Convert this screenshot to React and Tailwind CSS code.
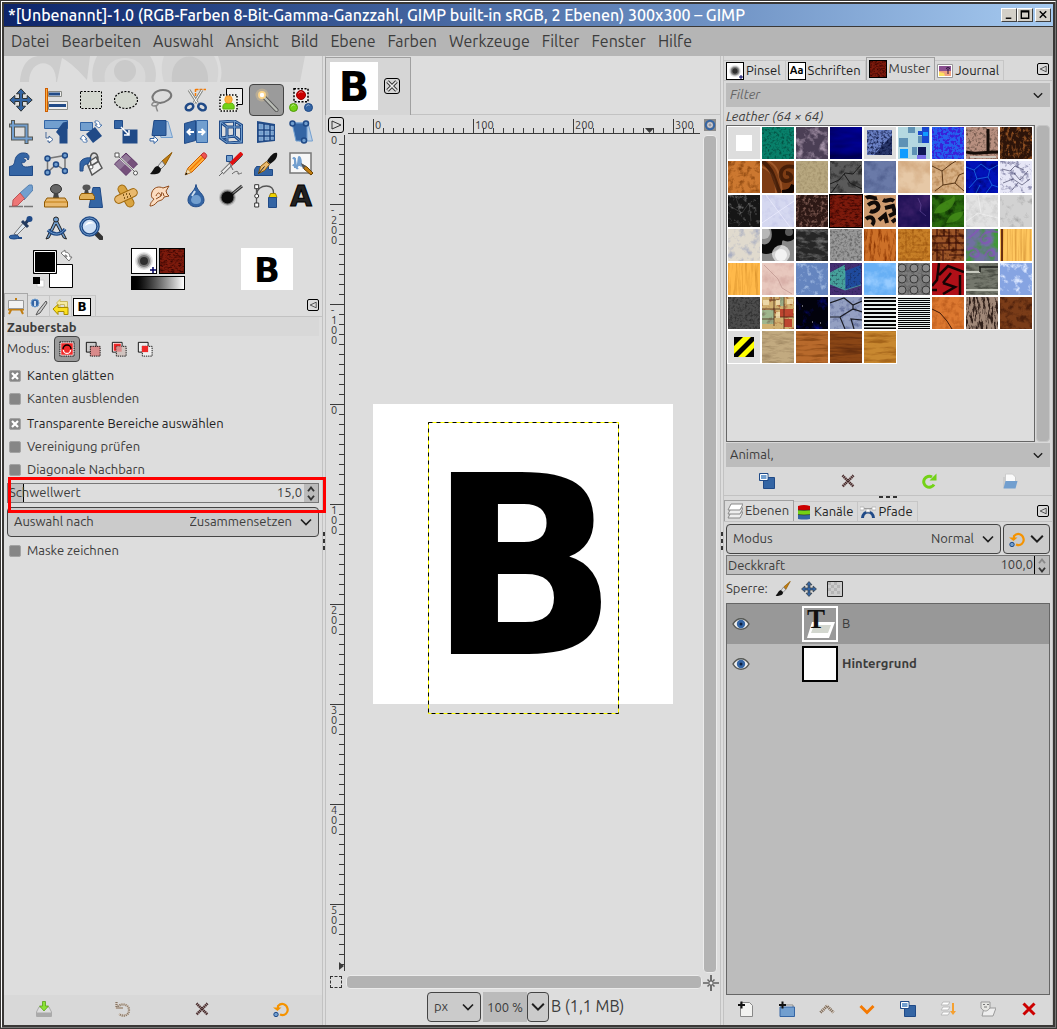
import { useEffect, useId, useRef, useState } from 'react'
import { clsx } from 'clsx'

const B = '#3465a4'
const D = '#204a87'
const L = '#729fcf'

const toolIcons = {
  Verschieben: (
    <path d="M12 .8l4.500 5h-3v4.700h4.700v-3l5 4.500-5 4.500v-3h-4.700v4.700h3l-4.500 5-4.500-5h3v-4.700H5.800v3l-5-4.500 5-4.500v3h4.700V5.800h-3z" fill={B} stroke="#2e3436" />
  ),
  Ausrichten: (
    <>
      <path d="M2.500 0v24" stroke="#ce5c00" strokeWidth="3" />
      <path d="M2.500 1v22" stroke="#fcaf3e" />
      <path d="M4.500 3.500h13v5h-13zM4.500 13.500h19v8h-19z" fill="#eee" stroke="#888a85" />
      <path d="M5 6h11M5 17.500h17" stroke={D} strokeWidth="3" />
    </>
  ),
  'Rechteckige Auswahl': (
    <rect x="1.500" y="3.500" width="21" height="17" fill="#d3d7cf" stroke="#000" strokeDasharray="2 1.500" />
  ),
  'Elliptische Auswahl': (
    <ellipse cx="12" cy="12" rx="11.500" ry="8.500" fill="#d3d7cf" stroke="#000" strokeWidth="1.200" strokeDasharray="2 1.500" />
  ),
  'Freie Auswahl': (
    <>
      <path d="M6 14C0 9 6 2 14 2s11 6 5 10-9 3-13 2" fill="none" stroke="#777" strokeWidth="2" />
      <path d="M6 14c-4 1-4 4-1 4s5-2 4-3-3-2-3-1M7.500 18c-1 3 1 3 1 5.500" fill="none" stroke="#8a8a8a" strokeWidth="1.500" />
    </>
  ),
  'Magnetische Schere': (
    <>
      <path d="M11.500 1v8M11.500 1.500H22" stroke="#f57900" strokeWidth="1.500" strokeDasharray="3 1" />
      <path d="M5 2l8.500 13M18 2L10 15" stroke="#888a85" strokeWidth="3" />
      <path d="M5 2l8.500 13M18 2L10 15" stroke="#fff" />
      <ellipse cx="5.500" cy="19" rx="4" ry="3" fill="none" stroke={D} strokeWidth="2.500" transform="rotate(-30 5.500 19)" />
      <ellipse cx="18" cy="19" rx="4" ry="3" fill="none" stroke={D} strokeWidth="2.500" transform="rotate(30 18 19)" />
    </>
  ),
  Vordergrundauswahl: (
    <>
      <path d="M7.500 .5h16v16h-16z" fill="#eee" stroke="#000" />
      <path d="M1 7h17v16H1z" fill="#f2f2e8" stroke="#000" strokeWidth="1.500" strokeDasharray="1.500 1.500" />
      <path d="M4 21c-1-6 3-6 6-6s6 0 5 6z" fill="#73d216" stroke="#5aae10" />
      <circle cx="9.500" cy="11.500" r="3.800" fill="#fcaf3e" stroke="#f57900" strokeWidth=".5" />
    </>
  ),
  Zauberstab: (
    <>
      <circle cx="7" cy="7" r="6.500" fill="#fcd58a" opacity=".3" />
      <path d="M9 9l12.500 13" stroke="#555" strokeWidth="4" strokeLinecap="round" />
      <path d="M9 9l12.500 13" stroke="#babdb6" strokeWidth="2.500" strokeLinecap="round" />
      <circle cx="7" cy="7" r="4" fill="#fcd58a" />
      <circle cx="7" cy="7" r="2.200" fill="#fff" />
    </>
  ),
  'Nach Farbe auswählen': (
    <>
      <path d="M5 .8h14v13H5z" fill="#eee" stroke="#000" strokeWidth="1.500" strokeDasharray="2 1.500" />
      <circle cx="12" cy="7" r="4.500" fill="#c00" stroke="#900" />
      <circle cx="4.500" cy="19.500" r="4" fill="#73d216" stroke="#4e9a06" />
      <circle cx="19.500" cy="19.500" r="4" fill={B} stroke={D} />
      <path d="M9.500 5.500c1-2 3-2 4-1M2.500 18.500c1-2 2-2 3-1M17.500 18.500c1-2 2-2 3-1" stroke="#fff" opacity=".5" />
    </>
  ),
  Zuschneiden: (
    <>
      <path d="M4 0v18.500h20M0 5.500h17.500V24" fill="none" stroke="#555753" strokeWidth="4" />
      <path d="M4 1v17.500h19M1 5.500h16.500V23" fill="none" stroke={L} strokeWidth="2" />
    </>
  ),
  'Vereinheitlichtes Transformieren': (
    <>
      <path d="M.5 .5h23v8H.5z" fill={L} stroke={B} />
      <path d="M19 2.500l4.500-1v22h-8V16L12 12z" fill={D} />
      <path d="M2 12v6h3v-2l4 3.500-4 3.500v-2H3" fill="#fff" stroke={D} strokeWidth=".8" />
    </>
  ),
  Drehen: (
    <>
      <path d="M1.500 2.500h12v8h-12z" fill={L} stroke={B} />
      <path d="M7 14l9-7 7 9-9 7z" fill={D} />
      <path d="M16 1c4-1 5 2 5 4h2l-3 3-4-3h2c0-2-1-2-2-2zM8 22c-4 1-5-1-5-3H1l3-4 4 4H6c0 1 1 1 2 1z" fill="#fff" stroke={B} strokeWidth=".8" />
    </>
  ),
  Skalieren: (
    <>
      <path d="M8.500 9.500h15v14h-15z" fill={D} />
      <path d="M.5 .5h8v8h-8z" fill={B} stroke={D} />
      <path d="M7 7l8 8m-5 0h5v-5" stroke="#fff" strokeWidth="1.500" fill="none" />
    </>
  ),
  Scheren: (
    <>
      <path d="M8 1.500h11l4.500 16H12z" fill="#b8cde4" stroke={L} />
      <path d="M5 .5h12v15H3z" fill={B} stroke={D} />
      <path d="M1 18.500h4v-2.500l4 4-4 3.500V21H1z" fill="#fff" stroke={B} />
    </>
  ),
  Spiegeln: (
    <>
      <path d="M.5 3.500l11-3v20l-11 3z" fill={B} stroke={D} />
      <path d="M12.500 .5h11v22h-11z" fill={L} stroke={B} />
      <path d="M10 12H4m2.500-3L3.500 12l3 3M14 12h6m-2.500-3l3 3-3 3" fill="none" stroke="#fff" strokeWidth="2" />
    </>
  ),
  Perspektive: (
    <>
      <path d="M1.500 2l14-1 7 4v17l-14 1-7-5zM8 7h14M8 7v15M1.500 2L8 7M15.500 1v15L2 18m13.500-2l7 6" fill="none" stroke={D} strokeWidth="3" />
      <path d="M1.500 2l14-1 7 4v17l-14 1-7-5zM8 7h14M8 7v15M1.500 2L8 7M15.500 1v15L2 18m13.500-2l7 6" fill="none" stroke={L} />
    </>
  ),
  '3D-Transformation': (
    <>
      <path d="M3 1l18 3v17L3 23z" fill={D} />
      <path d="M5 4l4 .6v4.400H5zm6 1l4 .5v3.500h-4zm6 1l2.500.3V9.500H17zM5 11h4v4H5zm6 0h4v4h-4zm6 0h2.500v4H17zM5 17h4v3.500H5zm6 0h4v3h-4zm6 0h2.500v2.500H17z" fill={L} stroke="#b8cde4" strokeWidth=".4" />
    </>
  ),
  'Griff-Transformation': (
    <>
      <path d="M5 3h14l4.500 18H10z" fill="#b8cde4" stroke={L} />
      <path d="M3 3h15v18H7z" fill={B} stroke={L} />
      <g fill={L} stroke={D} strokeWidth="1.500">
        <circle cx="3.500" cy="3.500" r="2.500" />
        <circle cx="17" cy="3.500" r="2.500" />
        <circle cx="15" cy="20.500" r="2.500" />
      </g>
    </>
  ),
  'Warp-Transformation': (
    <path d="M.5 23.500v-9C5 14 5.500 11 6 8 7 3 11 .5 15 1c5 0 6 4 4 7-1-3-3-3-4-2s1 2 2 2c-1 3-3 3-4 2-1 5 3 6 10.500 4v9.500z" fill={B} stroke={D} />
  ),
  'Käfig-Transformation': (
    <>
      <path d="M3.500 6.500L21 3.500v15l-9-6-8.500 8z" fill="none" stroke="#777" strokeWidth="1.500" />
      <g fill={L} stroke={D} strokeWidth="1.500">
        <circle cx="3.500" cy="6.500" r="2.500" />
        <circle cx="21" cy="3.500" r="2.500" />
        <circle cx="21" cy="19" r="2.500" />
        <circle cx="12" cy="12.500" r="2.500" />
        <circle cx="3.500" cy="20.500" r="2.500" />
      </g>
    </>
  ),
  Füllen: (
    <>
      <path d="M8 11l9-6 6 11-10 7z" fill="#eee" stroke="#555" strokeWidth="1.500" />
      <path d="M12 13C10 6 12 1 15 1s4 4 4 7M12 14l8-5" fill="none" stroke="#555" strokeWidth="1.500" />
      <circle cx="12" cy="15" r="2" fill="#fff" stroke="#555" />
      <path d="M12 6C6 5 1 8 1 12v7h3c0-5 1-7 5-7z" fill={B} stroke={D} />
    </>
  ),
  Farbverlauf: (
    <>
      <path d="M12 1l11.500 11L12 23.500.5 12z" fill="#75507b" stroke="#5c3566" />
      <path d="M12 2l5 4.500L6 17.500 1 12z" fill="#ad9fb5" opacity=".5" />
      <path d="M3 3l19 18" stroke="#fff" strokeWidth="2" />
      <path d="M3 3l19 18" stroke="#555" />
      <path d="M1 1h4v4H1z" fill="#fff" stroke="#555" />
      <circle cx="21.500" cy="21" r="2" fill="#fff" stroke="#555" />
    </>
  ),
  Pinsel: (
    <>
      <path d="M23 .5L13 9l3 4z" fill="#c17d11" stroke="#8f5902" />
      <path d="M13 9l-4 5 3 3 4-4z" fill="#ddd" stroke="#777" />
      <path d="M9 14c-4 0-4 4-8 8 5 1 11 0 11-5z" fill="#111" />
    </>
  ),
  Stift: (
    <>
      <path d="M1.500 22.500L4 16 18 2l4 4L8 20z" fill="#fcaf3e" stroke="#ce5c00" />
      <path d="M6 18L20 4" stroke="#f57900" strokeWidth="1.500" />
      <path d="M17 3l2-2c2-1 4.500 2 3.500 4l-2 2z" fill="#ef5350" stroke="#b33" />
      <path d="M1 23l2.500-6 3.500 3.500z" fill="#f2deb5" stroke="#8f5902" strokeWidth=".5" />
      <path d="M1 23l1.200-2.500 1.500 1.500z" fill="#000" />
    </>
  ),
  Sprühpistole: (
    <>
      <path d="M7.500 3.500h6v6h-6z" fill={L} stroke={D} />
      <path d="M3 21L14 10" stroke="#777" strokeWidth="4" />
      <path d="M3 21L14 10" stroke="#eee" strokeWidth="2" />
      <path d="M12 12L23 1" stroke="#e01010" strokeWidth="4" />
      <path d="M15 12L23.500 3.500" stroke="#555" />
      <path d="M10 10l4 8M0 24l4-4M13 22c4-4 7-3 6 0M19 22c2 0 3-1 4-1" fill="none" stroke="#666" />
    </>
  ),
  Tinte: (
    <>
      <path d="M2.500 14.500h12v3h4v6H.5v-6z" fill={B} stroke={D} />
      <path d="M23 1c-3-1-6 2-10 8l3 3c5-3 8-7 7-11z" fill="#111" />
      <path d="M12.500 9.500l3 3-5 6-6 3 2-7z" fill="#e9b96e" stroke="#8f5902" />
      <path d="M4.500 21.500l6-7" stroke="#222" />
    </>
  ),
  'MyPaint-Pinsel': (
    <>
      <path d="M1 1h21v20H1z" fill="#f7f7f7" stroke="#777" strokeWidth="1.500" />
      <path d="M4 7c3-5 2 11 4 8s1-13 3-9 0 10 2 7M4 14c2-4 3 4 5 2M6 6v10M10 5v9" fill="none" stroke={L} strokeWidth="2" />
      <path d="M14 13l4 2 6 6-2 2-7-6z" fill="#c17d11" stroke="#6b4302" />
      <path d="M12 11l5 3-3 3z" fill="#555" />
    </>
  ),
  Radierer: (
    <>
      <path d="M0 22.500h14M15 22.500h9" stroke="#777" strokeWidth="1.500" />
      <path d="M11 9L20 1l3 0 1 5L15 16z" fill={L} stroke="#5580b0" />
      <path d="M4 16l7-7 4.500 5.500-7 7-5 .5z" fill="#e77" stroke="#b55" />
    </>
  ),
  Klonen: (
    <>
      <ellipse cx="12" cy="5" rx="5.500" ry="4.500" fill="#666" stroke="#333" />
      <path d="M10 9h4l1 5H9z" fill="#444" />
      <path d="M3 14h18l2.500 4v5H.5v-5z" fill="#e9b96e" stroke="#8f5902" />
      <path d="M1 18h22" stroke="#c17d11" />
    </>
  ),
  'Perspektivisches Klonen': (
    <>
      <path d="M14 3.500h7l2.500 20H10z" fill={B} stroke={D} />
      <ellipse cx="7.500" cy="3.500" rx="4" ry="3" fill="#555" />
      <path d="M6 6h3l1 4H5z" fill="#444" />
      <path d="M2.500 9.500h11l2 3v3H.5v-3z" fill="#e0b058" stroke="#8f5902" />
    </>
  ),
  Heilen: (
    <>
      <rect x="0" y="8" width="24" height="8" rx="4" fill="#d9a441" stroke="#a06a10" transform="rotate(60 12 12)" />
      <rect x="0" y="8" width="24" height="8" rx="4" fill="#e9b96e" stroke="#a06a10" transform="rotate(-25 12 12)" />
      <path d="M9 11h1m2-1h1m2 0h1m-6 4h1m2-1h1m2-1h1" stroke="#5c3a00" strokeWidth="1.500" />
    </>
  ),
  Verschmieren: (
    <path d="M1 22c1-5 2-4 4-7-3-1-3-4-2-7 2-5 7-6 11-4l6-2-3 5 1 3 2 2-5 1c-1 4-5 3-7 5-2 3-5 4-7 4zM7 12c2-5 4-3 5 0m-5 3l5-3 1-4m2 4l-1-3" fill="#fbdcc0" stroke="#8f4a1a" />
  ),
  Weichzeichnen: (
    <>
      <path d="M12 .5c1 7 8 9 8 15.500 0 9-16 9-16 0C4 9.500 11 8 12 .5z" fill={B} stroke={D} />
      <path d="M12 11c3 0 5 2 5 5s-2 4-5 4-5-2-5-4 2-5 5-5z" fill={L} />
      <path d="M8 12c1-2 2-3 3-5" stroke="#cde" strokeWidth="2" />
    </>
  ),
  Abwedeln: (
    <>
      <path d="M12 11L23 2" stroke="#333" strokeWidth="3" />
      <path d="M13 10L23 2" stroke="#aaa" />
      <circle cx="8.500" cy="13.500" r="8.500" fill="#000" opacity=".15" />
      <circle cx="8.500" cy="13.500" r="7.200" fill="#000" opacity=".4" />
      <circle cx="8.500" cy="13.500" r="6" fill="#0a0a0a" />
    </>
  ),
  Pfade: (
    <>
      <path d="M2.500 21V11c0-6 5-9 10-9s7 3 7 7M2.500 3v18" fill="none" stroke="#555" strokeWidth="1.300" />
      <path d="M.7.700h4v4h-4zM.7 19h4v4h-4z" fill="#fff" stroke="#333" />
      <circle cx="2.700" cy="12" r="2" fill="#fff" stroke="#333" />
      <path d="M16.500 9.500h5l1.500 4h-8z" fill="#edd400" stroke="#a08000" />
      <path d="M14.500 13.500h8v10h-8z" fill={B} stroke={D} />
    </>
  ),
  Text: (
    <text x="12" y="22" textAnchor="middle" fontFamily="DejaVu Sans" fontWeight="bold" fontSize="28" fill="#222" stroke="#000">A</text>
  ),
  Farbpipette: (
    <>
      <path d="M5 18L15 6l3 3L8 19z" fill="#dfe8f0" stroke="#777" />
      <path d="M13 5l6 6M16 8l4-5" stroke="#223a5e" strokeWidth="3" />
      <circle cx="20.500" cy="3" r="3" fill={D} />
      <ellipse cx="5" cy="21" rx="5" ry="2" fill={B} stroke={D} />
      <path d="M9 22h4" stroke={D} strokeWidth="2" />
    </>
  ),
  Maßband: (
    <>
      <path d="M10.500 5h3l9 18-3-1-7.500-14L5 22l-3 1z" fill={L} stroke="#222" />
      <path d="M4 14c6 6 13 5 17-1" fill="none" stroke={D} strokeWidth="3.500" />
      <path d="M4 14c6 6 13 5 17-1" fill="none" stroke={L} />
      <circle cx="12" cy="3.500" r="2.500" fill={L} stroke="#222" />
    </>
  ),
  Vergrößerung: (
    <>
      <path d="M17 17l5 5" stroke="#333" strokeWidth="5" strokeLinecap="round" />
      <circle cx="10.500" cy="10.500" r="8.500" fill="#cfe0f5" stroke={D} strokeWidth="3.500" />
      <circle cx="10.500" cy="10.500" r="8.500" fill="none" stroke={L} />
      <path d="M6 10c1-4 6-6 9-2-3-1-6 0-9 2z" fill="#fff" />
    </>
  ),
}

// base and vein colours, noise frequency, gain and offset; art and over are drawn below and above the noise
const patterns = [
  { name: 'Clipboard', base: '#dddddd', art: <path d="M8 8h16v16H8z" fill="#fff" /> },
  { name: 'Green', base: '#08806a', vein: '#033f35', freq: '.4', gain: 2, off: 1 },
  { name: 'Purple Marble', base: '#4b3f55', vein: '#a593a8', freq: '.12', gain: 3, off: 1.500 },
  { name: 'Blue Grid', base: '#00009a', vein: '#000030', freq: '.01 .04', gain: 3, off: 1.2 },
  {
    name: 'Big Blue', base: '#dddddd', vein: '#000830', freq: '.4', gain: 2, off: .9,
    art: <><path d="M3 3h25v25H3z" fill="#6a80c4" /><path d="M28 8v20H10z" fill="#000830" opacity=".6" /></>,
    over: <path d="M0 0h32v32H0zM3 3v25h25V3z" fill="#dddddd" fillRule="evenodd" />,
  },
  {
    name: 'Blue Squares', base: '#b4d8e0',
    art: (
      <>
        <path d="M10 0h7v6h-7zM1 11h9v9H1zM20 9h6v7h-6zM14 20h5v8h-5z" fill="#5f92b5" />
        <path d="M24 0h7v16h-7zM20 4h4v4h-4z" fill="#1a48d0" />
        <path d="M2 22h8v9H2zM25 5h5v4h-5z" fill="#109cff" />
        <path d="M20 20h8v8h-8z" fill="#101858" />
        <path d="M19 28h9v4h-9z" fill="#7a70e8" />
      </>
    ),
  },
  { name: 'Blue Web', base: '#2460ee', vein: '#3a20d8', freq: '.35', gain: 8, off: 3.8 },
  {
    name: 'Bricks', base: '#b89080', vein: '#6d5448', freq: '.35', gain: 3, off: 1.500,
    over: <><path d="M0 25c8 3 16 0 32 0M22 2v22" fill="none" stroke="#140c08" strokeWidth="3" /><path d="M4 30h26" stroke="#ccc5bc" strokeWidth="2" /></>,
  },
  { name: 'Burlwood', base: '#2c140a', vein: '#8a4c20', freq: '.3 .2', gain: 4, off: 2 },
  { name: 'Burlwood 2', base: '#cc7830', vein: '#8d4810', freq: '.18', gain: 3, off: 1.500 },
  {
    name: 'Chocolate', base: '#7d3c14',
    over: (
      <g fill="none">
        <path d="M0 6c10 4 14 12 14 26M6 0c8 4 12 10 14 32" stroke="#b56a38" strokeWidth="2" opacity=".6" />
        <path d="M0 0c12 8 12 20 18 32M32 6C16 2 16 20 24 20s6-8 0-8" stroke="#230a00" strokeWidth="4" opacity=".6" />
        <path d="M20 32c8 0 10-3 12-8" stroke="#100400" strokeWidth="6" />
      </g>
    ),
  },
  { name: 'Sand', base: '#b8a880', vein: '#9f8e68', freq: '.35', gain: 2, off: .9 },
  { name: 'Rock', base: '#5a5a5a', vein: '#2c2c2c', freq: '.15', gain: 3, off: 1.500, over: <path d="M0 23l9-4 6-7 8 1 8-9M14 13l6 9 12 6M1 32l7-9" fill="none" stroke="#1c1c1c" /> },
  { name: 'Slate', base: '#6a7aa8', vein: '#4c5b8a', freq: '.1', gain: 2, off: .9 },
  { name: 'Crepe', base: '#e6c8a6', vein: '#d0a67c', freq: '.06', gain: 2, off: .9 },
  { name: 'Cracked', base: '#d8b084', vein: '#b0804e', freq: '.25', gain: 2, off: .9, over: <path d="M0 5l10 5 9-7 5-3M10 10l1 14-8 6M11 24l12-2 4-8 5-2M23 22l9 8" fill="none" stroke="#5a3818" /> },
  { name: 'Electric', base: '#0212b8', vein: '#000680', freq: '.12', gain: 3, off: 1.400, over: <path d="M0 6l8 3 7-6 8 6 9-5M8 9l3 9-8 9M11 18l11-2 2-8M22 16l4 8 6 2M26 24l-6 8M10 32l4-8" fill="none" stroke="#269cff" strokeWidth=".8" opacity=".7" /> },
  { name: 'Crackle', base: '#e6e6f6', vein: '#8585a8', freq: '.2', gain: 4, off: 2.2, over: <path d="M2 8l8 2 5-5 9 4M3 22l10-4 9 6 8-6M14 12l6 7 8-9M12 29l6-7" fill="none" stroke="#4c4c6c" strokeWidth=".7" /> },
  { name: 'Black Marble', base: '#161616', vein: '#777777', freq: '.2', gain: 3, off: 1.800, over: <path d="M0 10l14 8 7-10 2 18M7 0l5 14" stroke="#888" fill="none" strokeWidth=".5" opacity=".6" /> },
  { name: 'Lavender', base: '#d5d8f0', vein: '#c8cbea', freq: '.15', gain: 3, off: 1.500, over: <path d="M0 28L32 6M4 0l24 32" stroke="#eeeeff" strokeWidth=".7" /> },
  { name: 'Coffee Beans', base: '#2c1815', vein: '#74524a', freq: '.28', gain: 4, off: 2 },
  { name: 'Leather', base: '#7c1a0c', vein: '#3c0602', freq: '.2 .5', gain: 3, off: 1.400 },
  {
    name: 'Leopard', base: '#cf9c70',
    over: <path d="M2 3c4-3 8 1 11 0M4 10c4-3 8-4 10 0s-4 8-8 6M19 5c5 3 6-3 11 1M21 13l8-2 2 7-6 3M2 24c6-5 10 2 6 6M15 25l6-5 2 8M28 27l4-3" fill="none" stroke="#110b08" strokeWidth="4" />,
  },
  { name: 'Night', base: '#1d1054', vein: '#3b2068', freq: '.05', gain: 3, off: 1.400, over: <path d="M20 3l3 7-1 6 6 5" stroke="#9a7cd0" fill="none" strokeWidth=".5" opacity=".7" /> },
  { name: 'Leaves', base: '#2a6a0e', vein: '#0e3004', freq: '.1', gain: 3, off: 1.400, over: <path d="M2 18C8 4 18 8 22 0c4 8-6 20-20 18zM14 28c4-10 10-10 18-12-2 8-8 12-18 12z" fill="#4f9a1c" opacity=".6" /> },
  { name: 'White Marble', base: '#e2e2e2', vein: '#cecece', freq: '.15', gain: 3, off: 1.400, over: <path d="M0 27l12-9 20 5M12 0l3 18" stroke="#f5f5f5" strokeWidth=".6" fill="none" /> },
  { name: 'Marble', base: '#d2d2d2', vein: '#9c9c9c', freq: '.1', gain: 3, off: 1.700 },
  { name: 'Marble 2', base: '#e0dace', vein: '#a8adc0', freq: '.12', gain: 3, off: 1.600 },
  {
    name: 'Blobs', base: '#888888',
    over: (
      <>
        <path d="M9 0h23v10c-8 6-12-2-12 4S6 28 0 24v-9c6 2 12-4 9-15z" fill="#0a0a0a" />
        <circle cx="19" cy="25" r="9" fill="#f2f2f2" opacity=".7" />
        <circle cx="19" cy="26" r="6" fill="#fff" opacity=".7" />
        <circle cx="2" cy="4" r="6" fill="#ccc" opacity=".7" />
        <circle cx="27" cy="3" r="4" fill="#aaa" opacity=".5" />
      </>
    ),
  },
  { name: 'Moonfoot', base: '#262626', vein: '#6a6a6a', freq: '.1 .2', gain: 3, off: 1.500 },
  { name: 'Paper', base: '#989898', vein: '#6a6a6a', freq: '.4', gain: 3, off: 1.400 },
  { name: 'Bark', base: '#cc7028', vein: '#8d3804', freq: '.35 .08', gain: 3, off: 1.500 },
  { name: 'Parquet', base: '#c88028', vein: '#a05810', freq: '.3', gain: 2, off: .9, over: <path d="M8 1v22H30M15 0v16h17M0 30h25V22" fill="none" stroke="#8f4c0c" strokeWidth=".8" opacity=".7" /> },
  { name: 'Parquet 2', base: '#9b5528', vein: '#502008', freq: '.2', gain: 3, off: 1.400, over: <path d="M0 7h17M5 0v7M12 0v7M17 0v21M24 0v21M17 7h15M17 14h15M0 14h17M0 21h32M5 14v18M11 21v11M17 26h15" fill="none" stroke="#350b04" /> },
  {
    name: 'Swirls', base: '#7070a0', vein: '#409838', freq: '.05', gain: 5, off: 2.3,
    over: <path d="M32 3C12 0 12 16 20 14s2-7-1-4M1 21c10-7 16 7 8 7s-4-6-1-5M19 27c3-9 10-6 9-2s-6 1-4-1M3 9c5-4 8-7 10-9" fill="none" stroke="#8a4cc0" strokeWidth="2" opacity=".6" />,
  },
  { name: 'Pine', base: '#ffc860', vein: '#e0a040', freq: '.4 .01', gain: 3, off: 1.400, over: <path d="M2 0v32" stroke="#6b2f10" strokeWidth="2" /> },
  { name: 'Pine 2', base: '#ffb94a', vein: '#e09830', freq: '.35 .03', gain: 3, off: 1.500 },
  { name: 'Pink Marble', base: '#e8c8be', vein: '#d8b0a8', freq: '.08', gain: 3, off: 1.500, over: <path d="M2 2l14 14 4 9 10 6" stroke="#a87c78" fill="none" strokeWidth=".8" opacity=".6" /> },
  { name: 'Pool', base: '#6585bf', vein: '#98b2dc', freq: '.18', gain: 4, off: 2.2 },
  {
    name: 'Cubes', base: '#452f72', art: <><path d="M0 10l15-8v25L0 21z" fill="#46a09a" /><path d="M15 8l16-6v20l-16 5z" fill="#1f4a9c" /></>,
    vein: '#152040', freq: '.5', gain: 2, off: 1.1,
    over: <path d="M0 21l15 6 16-5M15 8v19M0 10l15-8" stroke="#4fb0a8" strokeWidth=".7" fill="none" />,
  },
  { name: 'Ice', base: '#68b0f5', vein: '#98ccff', freq: '.07', gain: 3, off: 1.400 },
  {
    name: 'Studs', base: '#7c7c7c', vein: '#585858', freq: '.3', gain: 2, off: .9,
    over: [4, 16, 28].map((cx) => [5, 16, 27].map((cy) => <circle key={cx + '-' + cy} cx={cx} cy={cy} r="4" fill="#8a8a8a" stroke="#3a3a3a" />)),
  },
  { name: 'Red Mesh', base: '#b01018', over: <path d="M0 23l5-6 2-17M7 12l9-9 16 6M0 27l5 0M11 20l12 4-12 7M11 20l8-10M28 12v20" fill="none" stroke="#150304" strokeWidth="2.500" /> },
  { name: 'Slate Wall', base: '#74776c', vein: '#4b4e45', freq: '.1 .3', gain: 3, off: 1.400, over: <><path d="M0 27h32M0 9h14" stroke="#e5e8dc" strokeWidth="1.500" /><path d="M13 4h19M14 4v5" stroke="#1b1d18" strokeWidth="1.500" fill="none" /></> },
  { name: 'Sky', base: '#86a4e2', vein: '#dde8ff', freq: '.14', gain: 4, off: 2.300 },
  { name: 'Steel', base: '#4c4c4c', vein: '#303030', freq: '.4', gain: 3, off: 1.400 },
  {
    name: 'Stones', base: '#d0b070', vein: '#8c3318', freq: '.18', gain: 3, off: 1.700,
    over: (
      <>
        <path d="M18 12h13v8H18zM22 22h8v8h-8z" fill="#b82c20" opacity=".8" />
        <path d="M0 13h12v14H0zM18 0h4v9h-4z" fill="#7fbba0" opacity=".6" />
        <path d="M0 12h18M12 0v29M22 0v32M0 22h12M12 20h20M7 3h10" stroke="#4b2a18" fill="none" strokeWidth=".8" />
        <path d="M1 3h6v5H1zM14 3h4v5h-4zM25 2h6v5h-6zM14 15h4v6h-4z" fill="#f2e2b5" opacity=".8" />
      </>
    ),
  },
  { name: 'Starfield', base: '#02020c', vein: '#060a80', freq: '.08', gain: 4, off: 2.200, over: <path d="M16 25h1M24 26h1M6 9h1" stroke="#ccd" /> },
  { name: 'Blue Stones', base: '#94a0c2', vein: '#6874a0', freq: '.2', gain: 3, off: 1.500, over: <path d="M0 6l14-5 9 7 9-4M10 20l13-8 9 3M0 20l10 0 5 12M23 8v5M24 32l-3-10 11 1" fill="none" stroke="#1a1c24" strokeWidth="1.200" /> },
  { name: 'Stripes', base: '#e8efec', art: <path d="M0 .5h32M0 4h32M0 8h32M0 12h32M0 16h32M0 20h32M0 24h32M0 28h32M0 31.500h32" stroke="#000" strokeWidth="2" /> },
  { name: 'Stripes Fine', base: '#e8efec', art: <path d="M0 1.500h32M0 3.500h32M0 5.500h32M0 7.500h32M0 9.500h32M0 11.500h32M0 13.500h32M0 15.500h32M0 17.500h32M0 19.500h32M0 21.500h32M0 23.500h32M0 25.500h32M0 27.500h32M0 29.500h32M0 31.500h32" stroke="#000" /> },
  { name: 'Terra', base: '#dc7830', vein: '#c06020', freq: '.18', gain: 3, off: 1.400, over: <path d="M0 12l8 4 7 8 5 8" fill="none" stroke="#401a08" /> },
  { name: 'Tree Bark', base: '#a08878', vein: '#30201a', freq: '.4 .12', gain: 5, off: 2.400 },
  { name: 'Rust', base: '#7a3c18', vein: '#4c200c', freq: '.16', gain: 3, off: 1.400 },
  { name: 'Warning', base: '#dddddd', art: <><path d="M6 6h20v20H6z" fill="#ff0" /><path d="M6 6h9L6 15zM26 6v4L10 26H6v-3L23 6zM26 17v9h-9z" fill="#000" /></> },
  { name: 'Wood 1', base: '#c2aa80', vein: '#a48c66', freq: '.07 .3', gain: 3, off: 1.400 },
  { name: 'Wood 2', base: '#b86a2c', vein: '#8f4c18', freq: '.04 .3', gain: 3, off: 1.400 },
  { name: 'Wood 3', base: '#8a4616', vein: '#642e0e', freq: '.03 .3', gain: 3, off: 1.400 },
  { name: 'Wood 4', base: '#c88830', vein: '#a4641a', freq: '.04 .25', gain: 3, off: 1.400 },
]

const leather = patterns.find((p) => p.name === 'Leather')

function Swatch({ pattern, className }) {
  const id = useId()
  const { base, art, vein, freq, gain, off, over } = pattern
  return (
    <svg viewBox="0 0 32 32" preserveAspectRatio="none" className={clsx('block', className)} aria-hidden="true">
      <rect width="32" height="32" fill={base} />
      {art}
      {vein && (
        <>
          <filter id={id} x="0" y="0" width="100%" height="100%" colorInterpolationFilters="sRGB">
            <feTurbulence type="fractalNoise" baseFrequency={freq} numOctaves="4" seed={base.charCodeAt(2)} />
            <feColorMatrix values={`0 0 0 0 0  0 0 0 0 0  0 0 0 0 0  ${gain} 0 0 0 ${-off + 0.1}`} result="noise" />
            <feFlood floodColor={vein} />
            <feComposite in2="noise" operator="in" />
          </filter>
          <rect width="32" height="32" filter={`url(#${id})`} />
        </>
      )}
      {over}
    </svg>
  )
}

function Chevron({ className = 'w-[14px]' }) {
  return (
    <svg viewBox="0 0 12 8" className={clsx('pointer-events-none shrink-0', className)} fill="none" stroke="#1e1e1e" strokeWidth="1.700" aria-hidden="true">
      <path d="M1 1.500l5 5 5-5" />
    </svg>
  )
}

function Icon({ size = 'size-4', children, box = 16 }) {
  return (
    <svg viewBox={`0 0 ${box} ${box}`} className={clsx('block shrink-0', size)} fill="none" aria-hidden="true">
      {children}
    </svg>
  )
}

const duplicateIcon = (
  <>
    <path d="M4.500 4.500h11v11h-11z" fill={B} stroke={D} />
    <path d="M.5.500h8.500v7H.5z" fill={L} stroke={D} />
    <path d="M1.500 1.500h6.500v5H1.500z" stroke="#fff" />
  </>
)
const resetIcon = (
  <>
    <path d="M7 13.500c5 2 8.500-2 7.500-6S9 1 5 5v3" stroke="#f59300" strokeWidth="2.200" />
    <path d="M0 6.500h8.500L4.500 10z" fill="#f59300" />
    <circle cx="3" cy="13.500" r="2.200" fill={L} stroke={D} />
  </>
)
const deleteIcon = (color) => <path d="M2.500 2.500l11 11M13.500 2.500l-11 11" stroke={color} strokeWidth="3" />
const dimDeleteIcon = (
  <>
    <path d="M2.500 2.500l11 11M13.500 2.500l-11 11" stroke="#a08c8c" strokeWidth="2.500" />
    <path d="M2.500 2.500l11 11M13.500 2.500l-11 11" stroke="#3a2020" strokeWidth="2.500" strokeDasharray="1 1" />
  </>
)

const brushPreview = (
  <>
    <rect width="24" height="24" fill="#fff" />
    <circle cx="12" cy="12" r="9" fill="#000" opacity=".1" />
    <circle cx="12" cy="12" r="7.500" fill="#000" opacity=".2" />
    <circle cx="12" cy="12" r="6" fill="#000" opacity=".35" />
    <circle cx="12" cy="12" r="4" fill="#000" opacity=".6" />
    <path d="M18 21h6M21 18v6" stroke="#000060" strokeWidth="1.500" />
  </>
)

function MenuButton() {
  return (
    <button type="button" aria-label="Reiter konfigurieren" className="mr-[3px] flex size-3 shrink-0 items-center justify-center rounded-[2px] border border-black">
      <Icon size="size-2" box={10}>
        <path d="M9 1.500v7L1.500 5z" stroke="#333" />
      </Icon>
    </button>
  )
}

function Check({ label, checked = false }) {
  const [on, setOn] = useState(checked)
  return (
    <label className={clsx('flex h-[23px] items-center gap-[6px]', on ? 'text-[#1e1e1e]' : 'text-[#3c3c3c]')}>
      <span className="relative block size-3 shrink-0">
        <input type="checkbox" checked={on} onChange={(e) => setOn(e.target.checked)} className="block size-3 appearance-none rounded-[2px] border border-[#a3a3a3] bg-[#868686]" />
        {on && (
          <svg viewBox="0 0 12 12" className="pointer-events-none absolute inset-0" fill="none" stroke="#fff" strokeWidth="2.200">
            <path d="M3 3l6 6M9 3L3 9" />
          </svg>
        )}
      </span>
      {label}
    </label>
  )
}

function SpinButtons({ upColor = '#333' }) {
  return (
    <span className="flex w-[14px] shrink-0 flex-col items-center justify-center gap-[3px] bg-[#bbbbbb]">
      <button type="button" aria-label="Erhöhen">
        <Icon size="h-[6px] w-2" box={8}><path d="M0 7l4-5 4 5" stroke={upColor} strokeWidth="2.500" /></Icon>
      </button>
      <button type="button" aria-label="Verringern">
        <Icon size="h-[6px] w-2" box={8}><path d="M0 1l4 5 4-5" stroke="#333" strokeWidth="2.500" /></Icon>
      </button>
    </span>
  )
}

function Dots({ vertical = false }) {
  return (
    <div className={clsx('flex gap-[3px]', vertical && 'flex-col')}>
      {[0, 1, 2].map((i) => (
        <span key={i} className={vertical ? 'h-1 w-[2px] bg-[#333]' : 'h-[2px] w-1 bg-[#333]'} />
      ))}
    </div>
  )
}

function TitleBar() {
  return (
    <header className="flex h-[22px] shrink-0 items-center justify-between bg-linear-to-r from-[#0d246a] to-[#a6caf0] pr-[2px] pl-1">
      <h1 className="truncate text-base leading-[22px] font-medium text-white">
        *[Unbenannt]-1.0 (RGB-Farben 8-Bit-Gamma-Ganzzahl, GIMP built-in sRGB, 2 Ebenen) 300x300 – GIMP
      </h1>
      <div className="flex">
        {[['Minimieren', 'M3 10h6'], ['Maximieren', 'M2.500 2h8v8h-8zM2 3h9'], ['Schließen', 'M3 2.500l7 7M10 2.500l-7 7']].map(([name, d]) => (
          <button key={name} type="button" aria-label={name} className="flex h-[14px] w-4 items-center justify-center border border-t-white border-r-[#404040] border-b-[#404040] border-l-white bg-[#d4d0c8] last:ml-[2px]">
            <Icon size="size-3" box={13}><path d={d} stroke="#000" strokeWidth="1.500" /></Icon>
          </button>
        ))}
      </div>
    </header>
  )
}

const menus = ['Datei', 'Bearbeiten', 'Auswahl', 'Ansicht', 'Bild', 'Ebene', 'Farben', 'Werkzeuge', 'Filter', 'Fenster', 'Hilfe']

function Toolbox() {
  const [tool, setTool] = useState('Zauberstab')
  return (
    <>
      <svg viewBox="0 0 318 26" preserveAspectRatio="xMinYMin slice" className="mb-[2px] block h-[26px] w-full shrink-0" aria-hidden="true">
        <path d="M16 26C17 10 24 0 36 0h50l-3 24C76 16 66 6 58 2l-5 24z" fill="#cdcdcd" />
        <path d="M25 26c0-24 28-26 27 0z" fill="#dddddd" />
        <path d="M93 0h53c6 9 7 18 5 26H89c-2-9 0-18 4-26z" fill="#cfcfcf" />
        <path d="M101 26c-6-32 46-32 40 0z" fill="#d8d8d8" />
        <circle cx="121" cy="15" r="11" fill="#cacaca" />
        <path d="M160 0h50c5 9 5 17 3 26h-53c-3-9-3-18 0-26z" fill="#d4d4d4" />
        <path d="M168 26c-4-34 38-34 36 0z" fill="#c8c8c8" />
        <path d="M214 0h87l-5 26h-80c3-9 1-17-2-26z" fill="#cfcfcf" />
      </svg>
      <div className="flex shrink-0 flex-wrap">
        {Object.entries(toolIcons).map(([name, art]) => (
          <button
            key={name}
            type="button"
            aria-label={name}
            aria-pressed={tool === name}
            onClick={() => setTool(name)}
            className={clsx('flex h-8 w-[35px] items-center pl-[5px]', tool === name && 'rounded border border-[#444] bg-[#9b9b9b]')}
          >
            <Icon size="size-6" box={24}>{art}</Icon>
          </button>
        ))}
      </div>
      <div className="flex shrink-0 items-start gap-14 pt-1 pb-[3px] pl-[29px]">
        <button type="button" aria-label="Vordergrund- und Hintergrundfarbe">
          <Icon size="size-[42px]" box={42}>
            <path d="M16.500 16.500h23v23h-23z" fill="#fff" stroke="#000" />
            <path d="M.5 2.500h23v23H.5z" fill="#000" stroke="#000" />
            <path d="M1.500 3.500h21v21h-21z" stroke="#fff" />
            <path d="M4 32h7v7H4z" fill="#fff" stroke="#ccc" />
            <path d="M0 29h7v7H0z" fill="#000" />
            <path d="M28 5l4-3v2c3 0 5 2 5 5h2l-3 4-4-4h2c0-2-1-2-2-2v2z" fill="#fff" stroke="#777" />
          </Icon>
        </button>
        <div className="grid w-[54px] grid-cols-2 gap-[2px]">
          <button type="button" aria-label="Aktiver Pinsel" className="size-[26px] border border-black"><Icon size="size-6" box={24}>{brushPreview}</Icon></button>
          <button type="button" aria-label="Aktives Muster" className="size-[26px] border border-black"><Swatch pattern={leather} className="size-6" /></button>
          <button type="button" aria-label="Aktiver Farbverlauf" className="col-span-2 h-[14px] border border-black bg-linear-to-r from-black to-white" />
        </div>
        <div className="flex h-[42px] w-[52px] items-center justify-center bg-white pt-px font-['DejaVu_Sans'] text-[34px] leading-none font-bold text-black">B</div>
      </div>
    </>
  )
}

const modes = [
  ['Ersetzen', <><path d="M2 2h14v14H2z" fill="#ef2929" stroke="#fff" /><path d="M1 1h16v16H1z" stroke="#000" strokeDasharray="1.500 1" /><path d="M5 10a4 4 0 108 0" stroke="#fff" strokeWidth="1.500" /><path d="M4.500 9a4.500 4.500 0 019 0" stroke="#000" strokeWidth="1.500" /></>],
  ['Hinzufügen', <><path d="M1.500 1.500h11v11h-11z" stroke="#000" fill="#ccc" /><path d="M6 6h11v11H6z" fill="#d98a8a" stroke="#000" strokeDasharray="1.500 1" /></>],
  ['Abziehen', <><path d="M1.500 1.500h11v11h-11z" stroke="#000" fill="#fff" /><path d="M3 3h8v8H3z" fill="#ef2929" /><path d="M6 6h11v11H6z" fill="#d0c4c0" stroke="#000" strokeDasharray="1.500 1" /><path d="M6 6h6v6H6z" fill="#d98a8a" /></>],
  ['Schnittmenge', <><path d="M1.500 1.500h11v11h-11z" stroke="#000" fill="#eee" /><path d="M6 6h11v11H6z" fill="#eee" stroke="#000" strokeDasharray="1.500 1" /><path d="M5.500 5.500h7v7h-7z" fill="#ef2929" /></>],
]

function ToolOptions() {
  const [mode, setMode] = useState('Ersetzen')
  return (
    <section className="flex min-h-0 flex-1 flex-col">
      <div className="flex items-center justify-between border-b border-[#c2c2c2]">
        <div className="mb-[-1px] flex items-end">
          <button type="button" aria-label="Werkzeugeinstellungen" className="flex h-6 w-6 items-center justify-center border border-b-0 border-[#a8a8a8] bg-[#dadada]">
            <Icon size="size-[18px]" box={18}>
              <path d="M9 1v3M4 13l-2 4M14 13l2 4M1 12.500h16" stroke="#c17d11" strokeWidth="2" />
              <path d="M1.500 3.500h15v8h-15z" fill="#f2f2f2" stroke="#999" />
            </Icon>
          </button>
          <button type="button" aria-label="Gerätestatus" className="flex h-[22px] w-[22px] items-center justify-center border-t border-r border-[#c6c6c6]">
            <Icon size="size-[18px]" box={18}>
              <circle cx="5" cy="5" r="4" fill={B} stroke={L} />
              <path d="M5 3v5" stroke="#fff" strokeWidth="1.500" />
              <path d="M16 3L8 13l-2 4 4-2 7-10z" fill="#ccc" stroke="#555" />
            </Icon>
          </button>
          <button type="button" aria-label="Journal" className="flex h-[22px] w-[22px] items-center justify-center border-t border-r border-[#c6c6c6]">
            <Icon size="size-[18px]" box={18}>
              <path d="M4.500 5L8 1.500v2h7.500V9h-3V6.500H8v2z" stroke="#c8b860" fill="#f5eaa0" />
              <path d="M1 11l5-4.500v3h10v7h-4v-3H6v3z" fill="#fce020" stroke="#a88c00" />
            </Icon>
          </button>
          <button type="button" aria-label="Bilder" className="flex h-[22px] w-6 items-center pl-px border-t border-r border-[#c6c6c6]">
            <span className="flex size-[18px] items-center justify-center border border-black bg-white font-['DejaVu_Sans'] text-[12px] font-bold text-black">B</span>
          </button>
        </div>
        <MenuButton />
      </div>
      <h2 className="mx-[3px] h-[19px] bg-[#d8d8d8] leading-[20px] font-bold">Zauberstab</h2>
      <div className="min-h-0 flex-1 px-[3px]">
        <div className="flex h-[26px] items-center">
          <span className="mr-[2px] w-[45px]">Modus:</span>
          {modes.map(([name, art]) => (
            <button key={name} type="button" aria-label={name} onClick={() => setMode(name)} className={clsx('flex size-[26px] items-center justify-center', mode === name && 'rounded border border-[#444] bg-[#9b9b9b]')}>
              <Icon size="size-4" box={18}>{art}</Icon>
            </button>
          ))}
        </div>
        <div className="px-[2px] pt-[2px]">
          <Check label="Kanten glätten" checked />
          <Check label="Kanten ausblenden" />
          <div className="pt-[2px]"><Check label="Transparente Bereiche auswählen" checked /></div>
          <Check label="Vereinigung prüfen" />
          <Check label="Diagonale Nachbarn" />
        </div>
        <div className="relative mt-[2px]">
          <div className="flex h-5 border border-[#777] bg-[#dddddd]">
            <span className="relative flex flex-1 items-center">
              <span className="absolute inset-y-0 left-0 w-4 border-r border-black bg-[#bfbfbf]" />
              <label htmlFor="threshold" className="relative pl-px">Schwellwert</label>
              <input id="threshold" defaultValue="15,0" className="relative w-0 min-w-0 flex-1 bg-transparent pr-[2px] text-right outline-none" />
            </span>
            <SpinButtons />
          </div>
          <div className="pointer-events-none absolute top-[-6px] right-[-7px] left-px z-10 h-9 border-3 border-[#ff0000]" />
        </div>
        <div className="mt-1 flex h-[30px] items-center rounded border border-[#444] bg-[#cbcbcb] px-[6px]">
          <label htmlFor="criterion" className="flex-1">Auswahl nach</label>
          <select id="criterion" className="appearance-none bg-transparent outline-none [field-sizing:content]">
            <option>Zusammensetzen</option>
          </select>
          <Chevron className="ml-2 w-3" />
        </div>
        <div className="mt-[2px] px-[2px]"><Check label="Maske zeichnen" /></div>
      </div>
      <div className="grid h-[30px] shrink-0 grid-cols-4 place-items-center bg-[#d8d8d8] pr-px pb-[2px]">
        <button type="button" aria-label="Einstellungen speichern">
          <Icon>
            <path d="M3 6h10l2.500 5v4.500H.5V11z" fill="#ddd" stroke="#aaa" />
            <path d="M1 11.500h14v3.500H1z" fill="#aaa" />
            <path d="M6.500 .5h3v4.500h3L8 10 3.500 5h3z" fill="#8ae234" stroke="#4e9a06" strokeWidth=".7" />
          </Icon>
        </button>
        <button type="button" aria-label="Einstellungen wiederherstellen">
          <Icon>
            <path d="M1.500 1v6H8M3 5.500C6 2 14 3 14 9s-6 7-10 4" stroke="#d8ccc0" strokeWidth="2.200" />
            <path d="M1.500 1v6H8M3 5.500C6 2 14 3 14 9s-6 7-10 4" stroke="#857565" strokeWidth="2.200" strokeDasharray="1 1" />
          </Icon>
        </button>
        <button type="button" aria-label="Einstellungen löschen"><Icon>{dimDeleteIcon}</Icon></button>
        <button type="button" aria-label="Zurücksetzen"><Icon>{resetIcon}</Icon></button>
      </div>
    </section>
  )
}

function useSize() {
  const ref = useRef(null)
  const [size, setSize] = useState({ width: 0, height: 0 })
  useEffect(() => {
    const observer = new ResizeObserver(([entry]) => {
      setSize({ width: entry.contentRect.width, height: entry.contentRect.height })
    })
    observer.observe(ref.current)
    return () => observer.disconnect()
  }, [])
  return [ref, size]
}

const range = (from, to, step) => {
  const out = []
  for (let n = from; n < to; n += step) out.push(n)
  return out
}

// The image origin sits 25px into the horizontal ruler and 269px into the vertical one.
function HorizontalRuler() {
  const [ref, { width }] = useSize()
  return (
    <div ref={ref} className="h-4 w-full">
      <svg className="block h-4 w-full" fill="#3a3a3a" fontSize="11" aria-hidden="true">
        {range(-20, width - 25, 10).map((t) => (
          <rect key={t} x={t + 25} y={t % 100 ? 10 : 1} width="1" height="15" />
        ))}
        {range(0, width - 45, 100).map((t) => <text key={t} x={t + 27} y="11">{t}</text>)}
        <rect y="15" width="100%" height="1" />
        <path d="M297 10h9l-4.500 5z" />
      </svg>
    </div>
  )
}

function VerticalRuler() {
  const [ref, { height }] = useSize()
  const digits = range(-300, height - 269, 100)
    .flatMap((t) => String(t).split('').map((c, i) => ({ c, y: t + 279 + i * 10 })))
    .filter(({ y }) => y > 8 && y < height - 4)
  return (
    <div ref={ref} className="h-full w-4">
      <svg className="block h-full w-4" fill="#3a3a3a" fontSize="11" aria-hidden="true">
        {range(-260, height - 269, 10).map((t) => (
          <rect key={t} x={t % 100 ? 10 : 1} y={t + 269} width="15" height="1" />
        ))}
        {digits.map(({ c, y }) => <text key={y} x="2" y={y}>{c}</text>)}
        <rect x="15" width="1" height="100%" />
        {height > 0 && <path d={`M10 ${height - 9}v8l5-4z`} />}
      </svg>
    </div>
  )
}

function ImageWindow() {
  return (
    <main className="flex min-w-0 flex-1 flex-col border-r border-l border-[#c2c2c2]">
      <div className="border-b border-[#c2c2c2] pt-px">
        <div className="mb-[-1px] ml-[-1px] flex h-[58px] w-[86px] items-center gap-[6px] border border-b-0 border-[#a0a0a0] bg-[#d6d6d6] pb-px pl-1">
          <div className="flex size-12 items-center justify-center bg-white pt-[2px] font-['DejaVu_Sans'] text-[40px] leading-none font-bold text-black">B</div>
          <button type="button" aria-label="Ansicht schließen" className="flex size-4 items-center justify-center rounded-[3px] border border-black">
            <Icon size="size-3" box={12}>
              <path d="M1.500 1.500l9 9M10.500 1.500l-9 9" stroke="#333" strokeWidth="3.500" />
              <path d="M1.500 1.500l9 9M10.500 1.500l-9 9" stroke="#eee" strokeWidth="1.500" />
            </Icon>
          </button>
        </div>
      </div>
      <div className="grid min-h-0 flex-1 grid-cols-[20px_1fr_17px] grid-rows-[20px_1fr_17px]">
        <button type="button" aria-label="Bildmenü" className="mt-[2px] ml-[2px] flex size-4 items-center justify-center rounded-[3px] border border-black">
          <Icon size="size-3" box={12}><path d="M2 2v8l9-4z" stroke="#333" /></Icon>
        </button>
        <div className="overflow-hidden pt-[3px] pr-[3px] pl-[2px]"><HorizontalRuler /></div>
        <button type="button" aria-label="Zoom mit Fenstergröße" className="mt-1 ml-px flex size-3 items-center justify-center bg-[#8a8a8a]">
          <Icon size="size-3" box={12}><circle cx="6" cy="6" r="4.200" fill="#999" stroke={B} strokeWidth="2" /><circle cx="6" cy="6" r="2.200" stroke="#dde" /></Icon>
        </button>
        <div className="min-h-0 overflow-hidden pb-1 pl-[3px]"><VerticalRuler /></div>
        <div className="flex min-h-0 items-center justify-center overflow-hidden pr-[3px] pb-[2px]">
          <div className="relative size-[300px] shrink-0 bg-white">
            <div className="absolute top-[18px] left-[55px] h-[291px] w-[190px] font-['DejaVu_Sans'] text-[250px] leading-[292px] font-bold text-black">
              B
              <svg className="absolute inset-0 h-full w-full overflow-visible" fill="none" aria-hidden="true">
                <rect x=".5" y=".5" width="100%" height="100%" stroke="#ff0" />
                <rect x=".5" y=".5" width="100%" height="100%" stroke="#000" strokeDasharray="4 4" />
              </svg>
            </div>
          </div>
        </div>
        <div className="mr-[3px] mb-[2px] rounded-sm border border-[#ebebeb] bg-[#b3b3b3]" />
        <div className="mt-px ml-1 size-3 border border-dashed border-[#333]" />
        <div className="mr-px mb-[3px] rounded-sm border border-[#ebebeb] bg-[#b3b3b3]" />
        <button type="button" aria-label="Navigation" className="self-start">
          <Icon><path d="M8 0v16M0 8h16" stroke="#222" strokeWidth="1.200" /><path d="M4.500 4.500l7 7M11.500 4.500l-7 7" stroke="#666" strokeWidth="1.500" /><circle cx="8" cy="8" r="1.500" fill="#eee" /></Icon>
        </button>
      </div>
      <footer className="flex h-[33px] shrink-0 items-start pl-[101px]">
        <span className="flex h-[30px] items-center rounded border border-[#444] bg-[#cbcbcb] px-[6px]">
          <select aria-label="Einheit" className="w-6 appearance-none bg-transparent outline-none">
            <option>px</option>
          </select>
          <Chevron className="ml-1 w-3" />
        </span>
        <input aria-label="Zoom" defaultValue="100 %" className="ml-[2px] h-[30px] w-11 bg-[#bbbbbb] text-center outline-none" />
        <button type="button" aria-label="Zoomstufen" className="flex h-[30px] w-[22px] items-center justify-center rounded border border-[#444] bg-[#cbcbcb]">
          <Chevron />
        </button>
        <span className="ml-[2px] truncate text-base leading-[28px]">B (1,1 MB)</span>
      </footer>
    </main>
  )
}

function Tab({ active, icon, children }) {
  return (
    <button type="button" role="tab" aria-selected={!!active} className={clsx('flex items-center gap-[2px] pr-1 pl-[2px]', active ? 'h-full border border-b-0 border-[#a0a0a0] bg-[#dadada]' : 'h-5 border-t border-r border-[#c6c6c6] text-[#1e1e1e]')}>
      {icon}
      {children}
    </button>
  )
}

function PatternsDock() {
  const [selected, setSelected] = useState('Leather')
  return (
    <section className="flex shrink-0 flex-col border-b border-[#c2c2c2] pt-px">
      <div className="flex h-6 items-center justify-between border-b border-[#c2c2c2]">
        <div role="tablist" className="flex h-full items-end">
          <Tab icon={<span className="border border-black"><Icon box={24}>{brushPreview}</Icon></span>}>Pinsel</Tab>
          <Tab icon={<span className="flex h-[18px] w-[18px] items-center justify-center border border-black bg-white text-[11px] font-bold text-black">Aa</span>}>Schriften</Tab>
          <Tab active icon={<span className="border border-black"><Swatch pattern={leather} className="size-4" /></span>}>Muster</Tab>
          <Tab icon={
            <Icon>
              <path d="M.5 1.500h15v13H.5z" fill="#fff" stroke="#999" />
              <path d="M2 3h12v10H2z" fill="#8a5090" />
              <path d="M2 8h12v5H2z" fill="#f0a080" />
              <path d="M2 9l5 1 1 3H2z" fill="#fce060" />
              <path d="M11 6v5M9 5.500l2-1 2 1" stroke="#221030" />
            </Icon>
          }>Journal</Tab>
        </div>
        <MenuButton />
      </div>
      <div className="px-[2px] pt-[2px]">
        <div className="flex h-6 items-center bg-[#bcbcbc] pr-[7px] pl-1">
          <input aria-label="Filter" placeholder="Filter" className="min-w-0 flex-1 bg-transparent italic outline-none placeholder:text-[#666]" />
          <Chevron className="w-[10px]" />
        </div>
        <p className="h-[18px] leading-[18px] italic">Leather (64 × 64)</p>
        <div className="flex h-[317px] gap-px">
          <div className="min-w-0 flex-1 overflow-hidden border border-[#666] bg-[#dddddd]">
            <div className="flex flex-wrap">
              {patterns.map((p) => (
                <button
                  key={p.name}
                  type="button"
                  aria-label={p.name}
                  onClick={() => setSelected(p.name)}
                  className={clsx('size-[34px] border', selected === p.name ? 'border-black' : 'border-white')}
                >
                  <Swatch pattern={p} className="size-8" />
                </button>
              ))}
            </div>
          </div>
          <div className="w-[14px] rounded-sm border border-[#c6c6c6] bg-[#b3b3b3]" />
        </div>
        <div className="mt-px flex h-6 items-center bg-[#bcbcbc] pr-[7px] pl-1">
          <input aria-label="Stichwörter" defaultValue="Animal," className="min-w-0 flex-1 bg-transparent outline-none" />
          <Chevron className="w-[10px]" />
        </div>
        <div className="grid h-7 grid-cols-4 place-items-center">
          <button type="button" aria-label="Muster duplizieren"><Icon>{duplicateIcon}</Icon></button>
          <button type="button" aria-label="Muster löschen"><Icon>{dimDeleteIcon}</Icon></button>
          <button type="button" aria-label="Muster aktualisieren">
            <Icon><path d="M13 11.500A5.500 5.500 0 1111 4" stroke="#73d216" strokeWidth="3" /><path d="M15.500.500v7h-7z" fill="#73d216" /></Icon>
          </button>
          <button type="button" aria-label="Muster als Bild öffnen">
            <Icon><path d="M3.500 1h7l3 3v8h-10z" fill="#fafafa" stroke="#ccc" /><path d="M1 4h2v11H1z" fill="#ccc" /><path d="M3.500 8h12l-2 7.500h-12z" fill={L} /></Icon>
          </button>
        </div>
      </div>
    </section>
  )
}

function Eye() {
  return (
    <button type="button" aria-label="Sichtbarkeit">
      <svg viewBox="0 0 18 12" className="block h-3 w-[18px]" aria-hidden="true">
        <path d="M1 6c4-7 12-7 16 0-4 7-12 7-16 0z" fill="#eee" stroke="#555753" strokeWidth="1.500" />
        <circle cx="9" cy="6" r="4.200" fill={B} />
        <circle cx="9" cy="6" r="1.500" fill="#0d2040" />
      </svg>
    </button>
  )
}

function LayersDock() {
  return (
    <section className="flex min-h-0 flex-1 flex-col pt-[2px]">
      <div className="flex h-[22px] shrink-0 items-center justify-between border-b border-[#c2c2c2]">
        <div role="tablist" className="flex h-full items-end">
          <Tab active icon={
            <Icon>
              <g fill="#eee" stroke="#888">
                <path d="M4 9h12l-3 6H1z" />
                <path d="M4 5h12l-3 6H1z" />
                <path d="M4 1h12l-3 6H1z" fill="#fff" />
              </g>
            </Icon>
          }>Ebenen</Tab>
          <Tab icon={
            <Icon>
              <path d="M2 2q6-2 12 0v4H2z" fill="#c00" />
              <path d="M2 6h12v5H2z" fill="#73d216" />
              <path d="M2 11h12v4q-6 1-12 0z" fill={B} />
              <path d="M2 6q6 1 12 0M2 10.500q6 1 12 0" stroke="#333" strokeWidth=".7" />
            </Icon>
          }>Kanäle</Tab>
          <Tab icon={
            <Icon>
              <path d="M1 4.500h14" stroke="#999" />
              <path d="M2.500 14C3 6 13 6 13.500 14" stroke={D} strokeWidth="3" />
              <path d="M0 3h4v3H0zM6 5h4v3H6zM12 3h4v3h-4z" fill="#fff" stroke="#aaa" strokeWidth=".7" />
            </Icon>
          }>Pfade</Tab>
        </div>
        <MenuButton />
      </div>
      <div className="flex min-h-0 flex-1 flex-col px-[2px] pt-[2px]">
        <div className="flex h-[30px] shrink-0 gap-[2px]">
          <div className="flex min-w-0 flex-1 items-center rounded border border-[#444] bg-[#cbcbcb] px-[6px]">
            <label htmlFor="blend" className="flex-1">Modus</label>
            <select id="blend" className="appearance-none bg-transparent outline-none [field-sizing:content]">
              <option>Normal</option>
            </select>
            <Chevron className="ml-2 w-3" />
          </div>
          <button type="button" aria-label="Modusgruppe" className="flex w-[47px] items-center justify-between rounded border border-[#444] bg-[#cbcbcb] px-[5px]">
            <Icon>{resetIcon}</Icon>
            <Chevron />
          </button>
        </div>
        <div className="mt-px flex h-5 shrink-0 border border-[#777] bg-[#c0c0c0]">
          <label htmlFor="opacity" className="pl-px leading-[18px]">Deckkraft</label>
          <input id="opacity" defaultValue="100,0" className="min-w-0 flex-1 border-r border-black bg-transparent pr-px text-right outline-none" />
          <SpinButtons upColor="#888" />
        </div>
        <div className="flex h-7 shrink-0 items-center">
          <span className="mr-[6px] w-[43px]">Sperre:</span>
          <button type="button" aria-label="Pixel sperren" className="mr-[10px]"><Icon box={24}>{toolIcons.Pinsel}</Icon></button>
          <button type="button" aria-label="Position sperren" className="mr-[10px]"><Icon box={24}>{toolIcons.Verschieben}</Icon></button>
          <button type="button" aria-label="Alphakanal sperren">
            <Icon><path d="M.5.500h15v15H.5z" fill="#ccc" stroke="#222" /><path d="M1 1h3v3H1zM7 1h3v3H7zM4 4h3v3H4zM10 4h3v3h-3zM1 7h3v3H1zM7 7h3v3H7zM4 10h3v3H4zM10 10h3v3h-3z" fill="#b5b5b5" /></Icon>
          </button>
        </div>
        <ul className="min-h-0 flex-1 overflow-hidden border border-[#666] bg-[#bcbcbc]">
          <li className="flex h-10 items-center bg-[#989898] pl-[5px]">
            <Eye />
            <span className="ml-[52px] border-2 border-white bg-[#999]">
              <Icon size="size-8" box={32}>
                <path d="M8 14h23l-6 16H3z" fill="#fff" />
                <path d="M10 17h17l-3 8H7z" fill="#d3d7cf" />
                <text x="12" y="20" textAnchor="middle" fontFamily="Liberation Serif" fontWeight="bold" fontSize="27" fill="#111">T</text>
              </Icon>
            </span>
            <span className="ml-1">B</span>
          </li>
          <li className="flex h-10 items-center pl-[5px]">
            <Eye />
            <span className="ml-[52px] size-9 border-2 border-black bg-white" />
            <span className="ml-1 font-bold">Hintergrund</span>
          </li>
        </ul>
        <div className="grid h-[30px] shrink-0 grid-cols-8 place-items-center pr-px pb-[2px]">
          <button type="button" aria-label="Neue Ebene"><Icon><path d="M2.500 1.500h9l3 3v11h-12z" fill="#f2f2f0" stroke="#888" /><path d="M0 4h7M3.500.500v7" stroke="#111" strokeWidth="2" /></Icon></button>
          <button type="button" aria-label="Neue Ebenengruppe"><Icon><path d="M2 4h12v3H2z" fill="#eee" stroke="#888" /><path d="M1 6h14.500v9.500H1z" fill={L} stroke={B} /><path d="M0 4h7M3.500.500v7" stroke="#111" strokeWidth="2" /></Icon></button>
          <button type="button" aria-label="Ebene anheben"><Icon><path d="M1.500 11.500L8 5l6.500 6.500" stroke="#d8ccc0" strokeWidth="3" /><path d="M1.500 11.500L8 5l6.500 6.500" stroke="#756555" strokeWidth="3" strokeDasharray="1 1" /></Icon></button>
          <button type="button" aria-label="Ebene absenken"><Icon><path d="M1.500 5L8 11.500 14.500 5" stroke="#f57900" strokeWidth="3" /></Icon></button>
          <button type="button" aria-label="Ebene duplizieren"><Icon>{duplicateIcon}</Icon></button>
          <button type="button" aria-label="Ebenen vereinen">
            <Icon><path d="M3 1h7L8 4H1zM3 6h7L8 9H1zM3 11h7l-2 3H1z" fill="#fff" stroke="#bbb" /><path d="M12 2h2v8h2l-3 4-3-4h2z" fill="#f5a030" /></Icon>
          </button>
          <button type="button" aria-label="Maske hinzufügen">
            <Icon><path d="M4 7h12l-3 8H2z" fill="#eee" stroke="#999" /><path d="M1 1h9v6c-3 4-6 4-9 0z" fill="#e6e6e2" stroke="#999" /><path d="M3 3.500h2M7 3.500h2M4 6h3" stroke="#777" /></Icon>
          </button>
          <button type="button" aria-label="Ebene löschen"><Icon>{deleteIcon('#cc0000')}</Icon></button>
        </div>
      </div>
    </section>
  )
}

function App() {
  return (
    <div className="flex h-screen min-h-[900px] flex-col bg-[#3a3836] p-px font-['Ubuntu','Noto_Sans','Open_Sans',sans-serif] text-[13px] text-[#3c3c3c]">
      <div className="flex min-h-0 flex-1 flex-col border border-t-white border-r-[#777] border-b-[#777] border-l-white">
        <div className="flex min-h-0 flex-1 flex-col border-2 border-[#3a3836] bg-[#dddddd]">
          <TitleBar />
          <nav className="flex h-[30px] shrink-0 items-center gap-3 border-t border-[#3a3836] bg-[#b5b5b5] pb-px pl-[7px] text-base">
            {menus.map((m) => <button key={m} type="button">{m}</button>)}
          </nav>
          <div className="flex min-h-0 flex-1">
            <aside className="flex w-[319px] shrink-0 flex-col border-r border-[#c2c2c2]">
              <Toolbox />
              <ToolOptions />
            </aside>
            <div className="flex w-[2px] shrink-0 items-center justify-center"><Dots vertical /></div>
            <ImageWindow />
            <div className="flex w-[2px] shrink-0 items-center justify-center"><Dots vertical /></div>
            <aside className="flex w-[330px] shrink-0 flex-col border-r border-l border-[#c2c2c2] bg-[#d9d9d9]">
              <PatternsDock />
              <div className="flex h-[2px] shrink-0 items-center justify-center"><Dots /></div>
              <LayersDock />
            </aside>
          </div>
        </div>
      </div>
    </div>
  )
}

export default App
